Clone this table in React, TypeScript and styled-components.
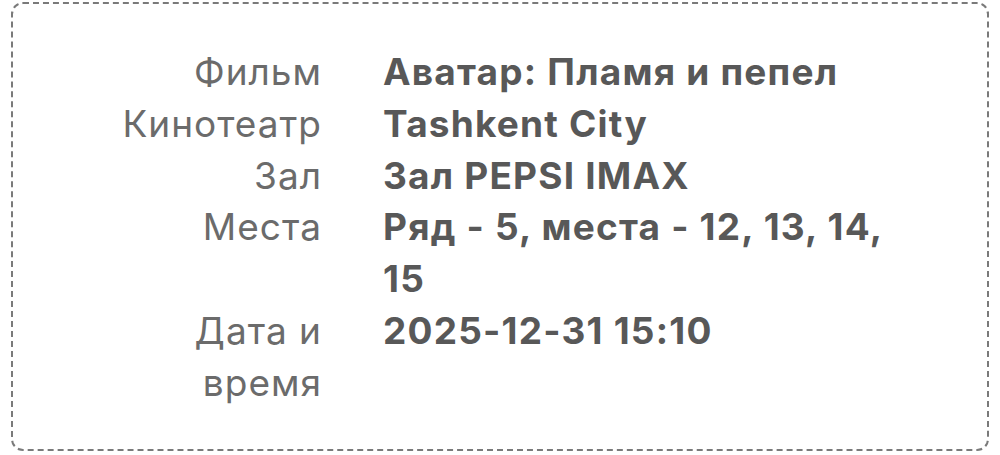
import styled, { createGlobalStyle } from "styled-components"

const GlobalStyle = createGlobalStyle`
  html, body {
    margin: 0;
    padding: 0;
    background: #ffffff;
  }
  body {
    font-family: "Inter", "Roboto", "Liberation Sans", sans-serif;
  }
`

interface Row {
  label: string
  value: string
}

const rows: Row[] = [
  { label: "Фильм", value: "Аватар: Пламя и пепел" },
  { label: "Кинотеатр", value: "Tashkent City" },
  { label: "Зал", value: "Зал PEPSI IMAX" },
  { label: "Места", value: "Ряд - 5, места - 12, 13, 14, 15" },
  { label: "Дата и время", value: "2025-12-31 15:10" },
]

function App() {
  return (
    <>
      <GlobalStyle />
      <Page>
        <Card>
          <Details>
            {rows.map((row) => (
              <DetailRow key={row.label}>
                <Label>{row.label}</Label>
                <Value>{row.value}</Value>
              </DetailRow>
            ))}
          </Details>
        </Card>
      </Page>
    </>
  )
}

const Page = styled.div`
  width: 1000px;
  height: 455px;
  padding: 2px 11px 4px 11px;
  box-sizing: border-box;
`

const Card = styled.div`
  height: 100%;
  box-sizing: border-box;
  border: 2px dashed #7a7a7a;
  border-radius: 12px;
  padding: 42px 0 0 78px;
`

const Details = styled.dl`
  margin: 0;
  display: grid;
  grid-template-columns: 230px 525px;
  column-gap: 62px;
  font-size: 37px;
  line-height: 51.8px;
`

const DetailRow = styled.div`
  display: contents;
`

const Label = styled.dt`
  text-align: right;
  color: #6b6b6b;
  font-weight: 400;
  letter-spacing: 1px;
  margin-right: -1px;
`

const Value = styled.dd`
  margin: 0;
  color: #585858;
  font-weight: 700;
  letter-spacing: 1.2px;
`

export default App
